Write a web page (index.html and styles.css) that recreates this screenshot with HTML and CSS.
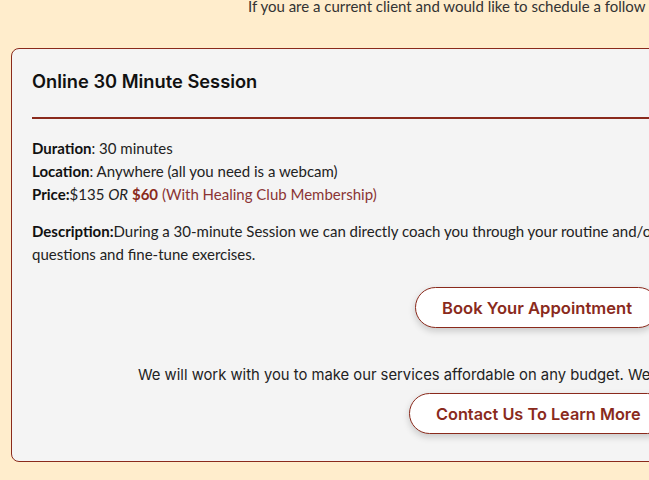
FILE: index.html
```html
<!DOCTYPE html>
<html lang="en">
<head>
<meta charset="utf-8">
<title>Online 30 Minute Session</title>
<link rel="stylesheet" href="styles.css">
</head>
<body>
<div class="page">
  <p class="intro">If you are a current client and would like to schedule a follow up session, please contact us directly.</p>
  <section class="card">
    <h2 class="card-title">Online 30 Minute Session</h2>
    <hr class="rule">
    <div class="details">
      <div class="line"><b>Duration</b>: 30 minutes</div>
      <div class="line"><b>Location</b>: Anywhere (all you need is a webcam)</div>
      <div class="line"><b>Price:</b>$135 <i>OR</i> <b class="accent">$60</b> <span class="accent-light">(With Healing Club Membership)</span></div>
    </div>
    <p class="desc"><b>Description:</b>During a 30-minute Session we can directly coach you through your routine and/or answer any<br>questions and fine-tune exercises.</p>
    <div class="actions actions-book">
      <a class="btn" href="#">Book Your Appointment</a>
    </div>
    <p class="note">We will work with you to make our services affordable on any budget. We offer payment plans and discounts.</p>
    <div class="actions actions-contact">
      <a class="btn" href="#">Contact Us To Learn More</a>
    </div>
  </section>
</div>
</body>
</html>
```
FILE: styles.css
```css
html, body {
  margin: 0;
  padding: 0;
  overflow: hidden;
  background: #ffedcc;
}
.page {
  width: 1000px;
  padding-left: 11px;
  font-family: Lato, "Noto Sans", sans-serif;
  color: #222;
}
.intro {
  margin: -4px 0 0 0;
  padding-left: 237px;
  font-size: 15px;
  line-height: 20px;
  color: #333;
  white-space: nowrap;
}
.card {
  margin-top: 32px;
  width: 960px;
  background: #f4f4f4;
  border: 1px solid #8a2a1c;
  border-radius: 8px;
  padding: 20px 20px 27px 20px;
  box-sizing: border-box;
}
.card-title {
  margin: 0;
  font-family: Inter, "Noto Sans", sans-serif;
  font-weight: 600;
  font-size: 18.3px;
  line-height: 24px;
  color: #111;
}
.rule {
  margin: 24px 0 0 0;
  border: 0;
  height: 2px;
  background: #8a2a1c;
}
.details {
  margin-top: 18px;
  font-size: 15px;
  line-height: 23px;
}
.details b, .desc b {
  font-weight: 700;
  color: #111;
}
.accent {
  color: #8a2a1c !important;
}
.accent-light {
  color: #8b3434;
}
.desc {
  margin: 14px 0 0 0;
  font-size: 15px;
  line-height: 23px;
  white-space: nowrap;
}
.actions {
  display: flex;
}
.actions-book {
  margin-top: 21px;
  padding-left: 383px;
}
.actions-contact {
  margin-top: 7px;
  padding-left: 377px;
}
.btn {
  display: flex;
  align-items: center;
  height: 41px;
  box-sizing: border-box;
  padding: 0 26px;
  border: 1px solid #8a2a1c;
  border-radius: 999px;
  background: #fff;
  color: #8a2a1c;
  font-family: Inter, "Noto Sans", sans-serif;
  font-weight: 600;
  font-size: 16.6px;
  text-decoration: none;
  white-space: nowrap;
  box-shadow: 0 3px 7px rgba(0, 0, 0, 0.18);
}
.actions-contact .btn {
  font-size: 16.3px;
}
.note {
  margin: 36px 0 0 0;
  padding-left: 106px;
  font-family: Inter, "Noto Sans", sans-serif;
  font-size: 14.8px;
  line-height: 22px;
  color: #222;
  white-space: nowrap;
}
```
